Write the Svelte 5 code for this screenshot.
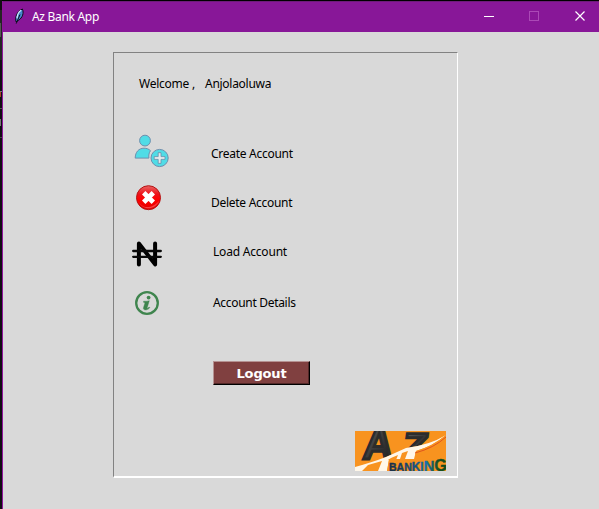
<script>
  const actions = [
    { id: 'create', label: 'Create Account' },
    { id: 'delete', label: 'Delete Account' },
    { id: 'load', label: 'Load Account' },
    { id: 'details', label: 'Account Details' }
  ];
</script>

<div class="desktop">
  <svg class="edge" width="2" height="509" shape-rendering="crispEdges">
    <rect width="2" height="509" fill="#100d12" />
    <rect y="10" width="2" height="50" fill="#242424" />
    <rect y="23" width="1" height="14" fill="#555" />
    <rect y="91" width="2" height="1" fill="#777" />
    <rect y="92" width="1" height="5" fill="#a54322" />
    <rect y="108" width="2" height="1" fill="#555" />
    <rect y="119" width="1" height="7" fill="#777" />
    <rect y="137" width="2" height="1" fill="#444" />
  </svg>
  <div class="window">
    <header>
      <svg class="feather" width="12" height="18" viewBox="0 0 12 18">
        <path d="M2 13.8C1 9 2.6 3.8 8.4 1c1.6 3.9.4 8.7-4.2 11.5z" fill="#4788ce" stroke="#080b18" stroke-width="1" />
        <path d="M3 10.4C3.2 6.6 4.9 3.6 7.2 2.2" fill="none" stroke="#d3efff" stroke-width="1.2" />
        <path d="M2.2 15.6 6 6.5" stroke="#08101d" stroke-width="1" />
      </svg>
      <span class="title">Az Bank App</span>
      <svg class="controls" width="108" height="14" viewBox="0 0 108 14">
        <path d="M0 6.5h10" stroke="#fff" />
        <rect x="45.5" y="1.5" width="9" height="9" fill="none" stroke="#ab49b6" />
        <path d="m91.5 1.5 9 9m0-9-9 9" stroke="#fff" stroke-width="1.2" />
      </svg>
    </header>
    <main>
      <section class="panel">
        <p class="welcome"><span class="greet">Welcome</span><span class="comma">,</span><span class="name">Anjolaoluwa</span></p>
        <div class="actions">
          {#each actions as action}
            <div class="row {action.id}">
              <div class="icon">
                {#if action.id === 'create'}
                  <svg width="36" height="34" viewBox="0 0 36 34">
                    <g fill="#50dce6" stroke="#6d8fae" stroke-width="1">
                      <circle cx="11" cy="6.6" r="5.4" />
                      <path d="M1.2 24.1C1.3 18 4.7 14.3 10 14.2c2.6 0 4.8.8 6.5 2.5-1.5 2-2 4.4-1.6 7.4z" />
                      <circle cx="25.6" cy="24" r="8.6" />
                    </g>
                    <path d="M24.2 18.7h2.8v3.9h4v2.8h-4v4h-2.8v-4h-4v-2.8h4z" fill="#e4e9ec" stroke="#668eaa" stroke-width=".8" />
                  </svg>
                {:else if action.id === 'delete'}
                  <svg width="26" height="26" viewBox="0 0 26 26">
                    <defs><linearGradient id="red" x2="0" y2="1"><stop stop-color="#e96565" /><stop offset=".35" stop-color="#ee1118" /><stop offset=".6" stop-color="#ff0000" /><stop offset="1" stop-color="#e00000" /></linearGradient></defs>
                    <circle cx="12.5" cy="12.7" r="12" fill="url(#red)" stroke="#b51414" />
                    <path d="M2.2 16C5 22 10 24 15 23c4-.8 7-4 8-7-4 4-7 6-12 6-4 0-6-2-8.8-6" fill="#ff6a6a" opacity=".6" />
                    <path d="m7.7 7.7 9.6 9.6m0-9.6-9.6 9.6" stroke="#fff" stroke-width="4.8" />
                  </svg>
                {:else if action.id === 'load'}
                  <svg width="30" height="26" viewBox="0 0 30 26">
                    <path d="M6.9 23.4V2.4l16.2 21V2.4" fill="none" stroke="#000" stroke-width="4" stroke-linecap="round" stroke-linejoin="round" />
                    <path d="M1.2 10h27.6M1.2 15.8h27.6" stroke="#080808" stroke-width="2.3" stroke-linecap="round" />
                  </svg>
                {:else}
                  <svg width="24" height="24" viewBox="0 0 24 24">
                    <circle cx="12" cy="12" r="10.8" fill="none" stroke="#3f854e" stroke-width="2.3" />
                    <circle cx="13.6" cy="6.6" r="1.9" fill="#3f854e" />
                    <path d="M8.6 10.2c1.8.2 3.8 0 5.7-.5l-2.2 7.3c-.1.8 1 .1 1.9-1l.9.6c-2.5 3.4-7.4 2.9-6.4 0l1.5-4.9-1.5-.4z" fill="#3f854e" stroke="#3f854e" stroke-width=".4" />
                  </svg>
                {/if}
              </div>
              <span class="label">{action.label}</span>
            </div>
          {/each}
        </div>
        <button>Logout</button>
        <svg class="logo" width="91" height="40" viewBox="0 0 91 40">
          <defs>
            <linearGradient id="dark" x2="1" y2="1"><stop stop-color="#666" /><stop offset=".5" stop-color="#3a3a3a" /><stop offset="1" stop-color="#171717" /></linearGradient>
            <linearGradient id="bank" gradientUnits="userSpaceOnUse" x1="34" x2="91"><stop stop-color="#182c43" /><stop offset=".45" stop-color="#15507f" /><stop offset=".66" stop-color="#1672a8" /><stop offset=".78" stop-color="#175b58" /><stop offset=".86" stop-color="#175020" /><stop offset="1" stop-color="#144b1c" /></linearGradient>
          </defs>
          <rect width="91" height="40" fill="#f8931f" />
          <g fill="url(#dark)" stroke="#2c2c2c" stroke-width="2.8" font-family="'Liberation Sans', sans-serif" font-weight="700">
            <text transform="translate(7 28) skewX(-5)" font-size="44" textLength="30" lengthAdjust="spacingAndGlyphs">A</text>
            <text transform="translate(46 28) skewX(-8)" font-size="37" textLength="25" lengthAdjust="spacingAndGlyphs">Z</text>
          </g>
          <path d="M0 36Q18 31 31 26L51 17Q75 14 91 4V40H0z" fill="#f8931f" />
          <path d="M0 36Q18 31 31 26L51 17Q75 14 91 4 78 15 61 20l-2 8H34l-2 12h-9l4-10-14 4-6 6H0z" fill="#fff7e9" />
          <path d="M61 20Q78 15 91 4v5Q80 19 60 26z" fill="#f8931f" />
          <path d="M60 22Q79 17 91 6" fill="none" stroke="#e0541d" stroke-width="1" />
          <path d="m36 27 7-3-2 5h-8zM47 22l6-2-3 8h-5z" fill="#f8931f" />
          <path d="M34 29h25v11H32z" fill="#f8931f" />
          <text x="34" y="39.5" fill="url(#bank)" stroke="url(#bank)" stroke-width=".4" font-family="'Liberation Sans', sans-serif" font-weight="700" font-size="11" textLength="58" lengthAdjust="spacingAndGlyphs">BAN<tspan font-size="12.5">KI</tspan><tspan font-size="15.5">N</tspan><tspan font-size="17">G</tspan></text>
        </svg>
      </section>
    </main>
  </div>
</div>

<style>
  :global(body) { margin: 0; overflow: hidden; }
  .desktop { display: flex; width: 599px; height: 509px; background: #000; }
  .edge { flex: none; display: block; }
  .window { flex: 1; box-sizing: border-box; margin-top: 1px; border-left: 1px solid #8e149b; background: #d9d9d9; font-family: "Noto Sans", sans-serif; font-size: 12px; line-height: 18px; color: #000; white-space: nowrap; }
  header { display: flex; align-items: flex-start; box-sizing: border-box; height: 31px; background: #881798; border-top: 1px solid #6d1c79; color: #fff; }
  .feather { margin: 6px 0 0 11px; }
  .title { margin: 6px 0 0 6px; width: 80px; letter-spacing: -.3px; }
  .controls { margin: 8px 7px 0 auto; }
  main { padding: 20px 0 0 110px; }
  .panel { display: flex; flex-direction: column; box-sizing: border-box; width: 345px; height: 426px; border: 1px solid #fff; border-top-color: #828282; border-left-color: #828282; border-bottom-width: 2px; }
  .welcome { display: flex; margin: 22px 0 0 25px; height: 18px; }
  .greet { width: 53px; letter-spacing: -.25px; }
  .comma { width: 13px; }
  .name { letter-spacing: -.28px; }
  .actions { display: flex; flex-direction: column; margin-top: 39px; }
  .row { display: flex; height: 49px; }
  .icon { width: 97px; box-sizing: border-box; flex: none; }
  .icon svg { display: block; }
  .label { margin-top: 13px; letter-spacing: -.28px; }
  .load .label { letter-spacing: -.2px; }
  .details .label { letter-spacing: -.31px; }
  .create .icon { padding: 2px 0 0 20px; }
  .delete .icon { padding: 4px 0 0 22px; }
  .load .icon, .details .icon { width: 99px; }
  .load .icon { padding: 11px 0 0 18px; }
  .load { height: 51px; }
  .details .icon { padding: 10px 0 0 21px; }
  button { box-sizing: border-box; width: 97px; height: 24px; margin: 31px 0 0 99px; padding: 2px 0 0 0; border: 1px solid #000; border-top-color: #b59292; border-left-color: #b59292; box-shadow: inset -1px -1px #522828; background: #804040; color: #fff; font: bold 13px/20px "DejaVu Sans", sans-serif; letter-spacing: -.15px; }
  .logo { display: block; margin: 46px 0 0 241px; overflow: hidden; }
</style>
